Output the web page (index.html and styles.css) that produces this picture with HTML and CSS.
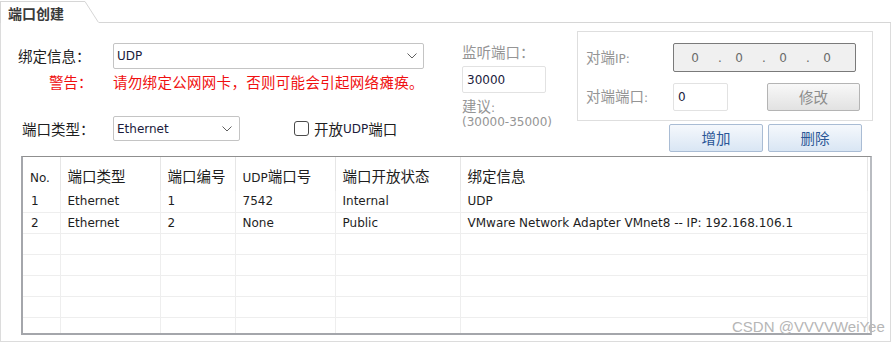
FILE: index.html
```html
<!DOCTYPE html>
<html lang="zh-CN">
<head>
  <meta charset="UTF-8">
  <title>端口创建</title>
  <link rel="stylesheet" href="styles.css">
</head>
<body>
  <div class="window">
    <div class="tab-row">
      <div class="tab">端口创建</div>
      <svg class="tab-slope" width="14" height="22" viewBox="0 0 14 22"><path d="M0 0.5 L13.5 21.5" stroke="#d6d6d6" fill="none"/></svg>
      <div class="tab-fill"></div>
    </div>
    <div class="panel">
      <div class="top">
        <div class="bind-col">
          <div class="form-row">
            <span class="label zh">绑定信息：</span>
            <div class="combo combo-wide">
              <span>UDP</span>
              <svg width="10" height="6" viewBox="0 0 10 6"><path d="M0.5 0.5 L5 5 L9.5 0.5" stroke="#606060" fill="none"/></svg>
            </div>
          </div>
          <div class="warn-row zh">
            <span class="label warn-label">警告：</span>
            <span class="warn-text">请勿绑定公网网卡，否则可能会引起网络瘫痪。</span>
          </div>
          <div class="form-row type-row">
            <span class="label type-label zh">端口类型：</span>
            <div class="combo combo-short">
              <span>Ethernet</span>
              <svg width="10" height="6" viewBox="0 0 10 6"><path d="M0.5 0.5 L5 5 L9.5 0.5" stroke="#606060" fill="none"/></svg>
            </div>
            <label class="check zh"><span class="box"></span>开放<span class="en">UDP</span>端口</label>
          </div>
        </div>

        <div class="listen-col">
          <div class="muted zh">监听端口：</div>
          <div class="text-box listen-box">30000</div>
          <div class="muted hint zh">建议<span class="en">:</span></div>
          <div class="muted hint">(30000-35000)</div>
        </div>

        <div class="peer-col">
          <div class="group">
            <div class="group-row">
              <span class="peer-label zh">对端<span class="en">IP:</span></span>
              <div class="ip-box">
                <span>0</span><span class="dot">.</span><span>0</span><span class="dot">.</span><span>0</span><span class="dot">.</span><span>0</span>
              </div>
            </div>
            <div class="group-row second">
              <span class="peer-label zh">对端端口<span class="en">:</span></span>
              <div class="text-box port-box">0</div>
              <button class="btn btn-gray zh">修改</button>
            </div>
          </div>
          <div class="btn-row">
            <button class="btn btn-blue zh">增加</button>
            <button class="btn btn-blue zh">删除</button>
          </div>
        </div>
      </div>

      <div class="grid-wrap">
        <table class="port-grid">
          <colgroup>
            <col class="c-no"><col class="c-type"><col class="c-num"><col class="c-udp"><col class="c-state"><col class="c-bind">
          </colgroup>
          <thead>
            <tr>
              <th><span class="en">No.</span></th>
              <th>端口类型</th>
              <th>端口编号</th>
              <th><span class="en">UDP</span>端口号</th>
              <th>端口开放状态</th>
              <th>绑定信息</th>
            </tr>
          </thead>
          <tbody>
            <tr><td>1</td><td>Ethernet</td><td>1</td><td>7542</td><td>Internal</td><td>UDP</td></tr>
            <tr><td>2</td><td>Ethernet</td><td>2</td><td>None</td><td>Public</td><td>VMware Network Adapter VMnet8 -- IP: 192.168.106.1</td></tr>
            <tr><td></td><td></td><td></td><td></td><td></td><td></td></tr>
            <tr><td></td><td></td><td></td><td></td><td></td><td></td></tr>
            <tr><td></td><td></td><td></td><td></td><td></td><td></td></tr>
            <tr><td></td><td></td><td></td><td></td><td></td><td></td></tr>
            <tr><td></td><td></td><td></td><td></td><td></td><td></td></tr>
          </tbody>
        </table>
      </div>
    </div>
  </div>
  <div class="watermark">CSDN @VVVVWeiYee</div>
</body>
</html>
```

FILE: styles.css
```css
body {
  margin: 0;
  background-color: #ffffff;
  color: #1e1e1e;
  font-family: "DejaVu Sans", "Noto Sans CJK SC", sans-serif;
  font-size: 12px;
}

.zh {
  font-family: "Noto Sans CJK SC", sans-serif;
  font-size: 14.5px;
}

.en {
  font-family: "DejaVu Sans", sans-serif;
  font-size: 12px;
}

.window {
  width: 891px;
}

/* tab header */
.tab-row {
  display: flex;
  height: 22px;
  margin-top: 1px;
}

.tab {
  width: 85px;
  box-sizing: border-box;
  border-top: 1px solid #d6d6d6;
  border-left: 1px solid #d6d6d6;
  padding: 2px 0 0 7px;
  font-family: "Noto Sans CJK SC", sans-serif;
  font-size: 14px;
  font-weight: bold;
  line-height: 19px;
  color: #3a3a3a;
}

.tab-slope {
  display: block;
  flex: none;
}

.tab-fill {
  flex: 1;
  border-bottom: 1px solid #d6d6d6;
}

.panel {
  height: 319px;
  box-sizing: border-box;
  border: 1px solid #dcdcdc;
  border-top: none;
}

.top {
  display: flex;
  align-items: flex-start;
}

/* left form */
.bind-col {
  width: 407px;
  margin-left: 17px;
  padding-top: 20px;
}

.form-row {
  display: flex;
  align-items: center;
}

.label {
  width: 95px;
  box-sizing: border-box;
  flex: none;
  line-height: 18px;
}

.warn-row {
  display: flex;
  margin-top: 4px;
  line-height: 18px;
  color: #f01010;
}

.warn-label {
  padding-left: 31px;
}

.warn-text {
  letter-spacing: 0.3px;
}

.type-row {
  margin-top: 25px;
}

.type-label {
  padding-left: 4px;
}

.combo {
  display: flex;
  align-items: center;
  justify-content: space-between;
  box-sizing: border-box;
  border: 1px solid #c4c4c4;
  border-radius: 2px;
  padding: 0 6px 0 3px;
  color: #1b1b3c;
}

.combo svg {
  display: block;
}

.combo-wide {
  width: 311px;
  height: 26px;
}

.combo-short {
  width: 127px;
  height: 25px;
  padding-right: 7px;
}

.check {
  display: flex;
  align-items: center;
  margin-left: 54px;
  line-height: 18px;
}

.box {
  width: 15px;
  height: 15px;
  box-sizing: border-box;
  border: 1px solid #4a4a4a;
  border-radius: 3px;
  margin-right: 5px;
  background-color: #ffffff;
}

.check .en {
  color: #1b1b3c;
}

/* listen port */
.listen-col {
  width: 84px;
  margin-left: 37px;
  padding-top: 20px;
}

.muted {
  color: #959595;
  line-height: 18px;
}

.text-box {
  box-sizing: border-box;
  border: 1px solid #e2e2e2;
  border-radius: 2px;
  padding-left: 4px;
  display: flex;
  align-items: center;
  color: #1b1b3c;
}

.listen-box {
  width: 84px;
  height: 27px;
  margin-top: 5px;
}

.hint {
  line-height: 14px;
  white-space: nowrap;
}

.listen-box + .hint {
  margin-top: 6px;
}

/* peer group */
.peer-col {
  margin-left: 31px;
  margin-top: 8px;
}

.group {
  width: 296px;
  box-sizing: border-box;
  border: 1px solid #dedede;
  padding: 11px 0 9px 8px;
}

.group-row {
  display: flex;
  align-items: center;
}

.group-row.second {
  margin-top: 11px;
}

.peer-label {
  width: 87px;
  flex: none;
  color: #959595;
  line-height: 18px;
}

.peer-label .en {
  color: #959595;
}

.ip-box {
  display: flex;
  align-items: center;
  width: 183px;
  height: 29px;
  box-sizing: border-box;
  border: 1px solid #7a7a7a;
  border-radius: 2px;
  background-color: #f0f0f0;
  padding-left: 10px;
  color: #6a6a6a;
}

.ip-box span {
  width: 22px;
  text-align: center;
}

.ip-box .dot {
  padding-left: 6px;
  box-sizing: border-box;
}

.port-box {
  width: 55px;
  height: 28px;
  margin-right: 39px;
}

.btn {
  height: 28px;
  box-sizing: border-box;
  border-radius: 2px;
  padding: 0;
  line-height: 24px;
  cursor: pointer;
}

.btn-gray {
  width: 93px;
  border: 1px solid #b4b4b4;
  background: linear-gradient(#f8f8f8, #e2e2e2);
  color: #8c8c8c;
}

.btn-row {
  display: flex;
  gap: 5px;
  margin-top: 3px;
  margin-left: 92px;
}

.btn-blue {
  width: 94px;
  border: 1px solid #a9bcd4;
  background: linear-gradient(#f5f8fc, #d9e6f4);
  color: #2b5797;
}

/* port list */
.grid-wrap {
  width: 851px;
  height: 179px;
  box-sizing: border-box;
  margin: 4px 0 0 20px;
  border-top: 1px solid #8f8f8f;
  border-left: 2px solid #a4a6ab;
  border-right: 2px solid #b9bcc1;
  border-bottom: 2px solid #a4a6ab;
  overflow: hidden;
}

.port-grid {
  width: 844px;
  table-layout: fixed;
  border-collapse: collapse;
}

.c-no { width: 37px; }
.c-type { width: 100px; }
.c-num { width: 75px; }
.c-udp { width: 100px; }
.c-state { width: 125px; }
.c-bind { width: 407px; }

.port-grid th {
  height: 34px;
  padding: 2px 0 0 7px;
  box-sizing: border-box;
  text-align: left;
  font-family: "Noto Sans CJK SC", sans-serif;
  font-size: 14.5px;
  font-weight: normal;
  border-right: 1px solid #e6e6e6;
  white-space: nowrap;
  overflow: hidden;
}

.port-grid td {
  height: 21px;
  padding: 1px 0 0 7px;
  box-sizing: border-box;
  border-right: 1px solid #eeeeee;
  border-bottom: 1px solid #eeeeee;
  white-space: nowrap;
  overflow: hidden;
  line-height: 19px;
}

.port-grid td:first-child {
  padding-left: 8px;
}

.watermark {
  position: absolute;
  left: 732px;
  top: 318px;
  font-family: "Liberation Sans", sans-serif;
  font-size: 15px;
  line-height: 17px;
  color: #b6b6b6;
  white-space: nowrap;
}
```
